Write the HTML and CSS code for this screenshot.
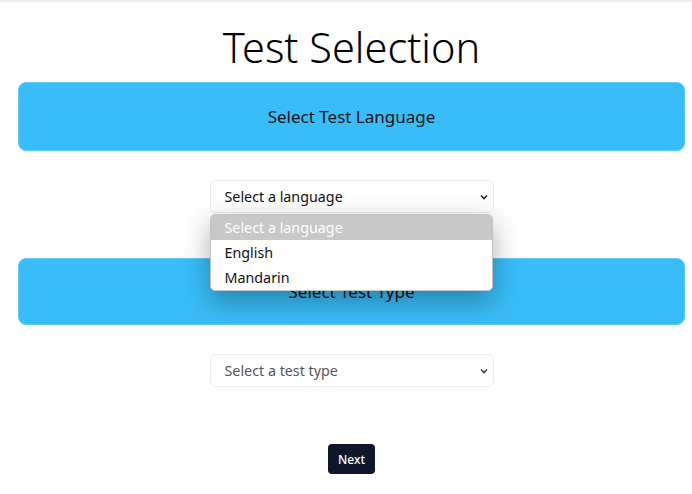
FILE: index.html
```html
<!DOCTYPE html>
<html lang="en">
<head>
<meta charset="utf-8">
<title>Test Selection</title>
<link rel="stylesheet" href="styles.css">
</head>
<body>
<div class="topshade"></div>
<main class="page">
  <h1 class="title">Test Selection</h1>

  <section class="step">
    <div class="banner">Select Test Language</div>
    <div class="field">
      <div class="select">
        <span class="select-value">Select a language</span>
        <svg class="chevron" width="10" height="10" viewBox="0 0 10 10"><path d="M2 3.5 L5 6.5 L8 3.5" fill="none" stroke="#222" stroke-width="1.6"/></svg>
      </div>
      <ul class="listbox">
        <li class="option active">Select a language</li>
        <li class="option">English</li>
        <li class="option">Mandarin</li>
      </ul>
    </div>
  </section>

  <section class="step step-second">
    <div class="banner">Select Test Type</div>
    <div class="field">
      <div class="select">
        <span class="select-value muted">Select a test type</span>
        <svg class="chevron" width="10" height="10" viewBox="0 0 10 10"><path d="M2 3.5 L5 6.5 L8 3.5" fill="none" stroke="#444" stroke-width="1.6"/></svg>
      </div>
    </div>
  </section>

  <div class="actions">
    <button class="next">Next</button>
  </div>
</main>
</body>
</html>
```

FILE: styles.css
```css
* { box-sizing: border-box; }
html, body { margin: 0; padding: 0; background: #fff; }
body {
  font-family: "Noto Sans", "Open Sans", sans-serif;
  color: #000;
  position: relative;
}
.topshade {
  height: 3px;
  background: linear-gradient(#e6e6e6, #ffffff);
}
.page {
  padding: 15.6px 7px 0 18px;
  display: flex;
  flex-direction: column;
  align-items: stretch;
}
.title {
  margin: 0 0 6.9px 0;
  font-size: 41.5px;
  font-weight: 350;
  text-align: center;
  line-height: 1.362;
}
.step {
  display: flex;
  flex-direction: column;
  align-items: center;
}
.step-second { margin-top: 45px; }
.banner {
  align-self: stretch;
  background: #38bdf8;
  border: 1px solid #5ccafa;
  border-radius: 8px;
  height: 69px;
  display: flex;
  align-items: center;
  justify-content: center;
  font-size: 17px;
  color: #111;
}
.step-second .banner { height: 67px; }
.field {
  position: relative;
  margin-top: 29px;
  width: 284px;
}
.select {
  height: 33px;
  border: 1px solid #ececec;
  border-radius: 6px;
  background: #fff;
  display: flex;
  align-items: center;
  justify-content: space-between;
  padding: 0 4px 0 14px;
  font-size: 14.3px;
}
.select-value { color: #111; }
.select-value.muted { color: #555; }
.chevron { display: block; }
.listbox {
  position: absolute;
  left: 0;
  top: 34px;
  width: 283px;
  margin: 0;
  padding: 0;
  list-style: none;
  background: #fff;
  border: 1px solid #c4c4c4;
  border-radius: 5px;
  box-shadow: 0 10px 28px rgba(0,0,0,0.32);
  overflow: hidden;
  z-index: 5;
  font-size: 14.3px;
}
.option {
  height: 25px;
  line-height: 25px;
  padding-left: 14px;
  color: #111;
}
.option.active {
  background: #c8c8c8;
  color: #fff;
}
.actions {
  display: flex;
  justify-content: center;
  margin-top: 57px;
}
.next {
  background: #0f172a;
  color: #fff;
  border: none;
  border-radius: 4px;
  width: 47px;
  height: 30px;
  padding: 0;
  font-family: "Noto Sans", sans-serif;
  font-size: 12px;
  font-weight: 500;
}
```
